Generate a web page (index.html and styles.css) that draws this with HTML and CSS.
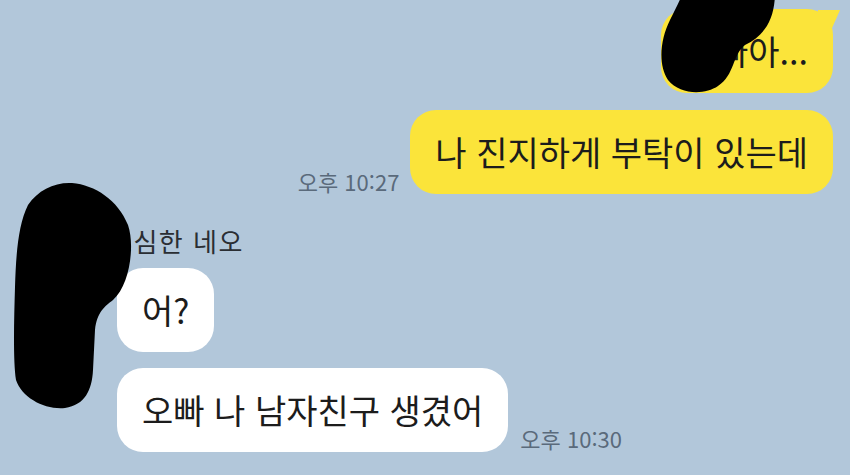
FILE: index.html
```html
<!DOCTYPE html>
<html lang="ko">
<head>
<meta charset="utf-8">
<link rel="stylesheet" href="styles.css">
</head>
<body>
<div class="chat">
  <div class="row mine">
    <div class="bubble yellow tail">오빠아...</div>
  </div>
  <div class="row mine second">
    <span class="time">오후 10:27</span>
    <div class="bubble yellow">나 진지하게 부탁이 있는데</div>
  </div>
  <div class="others">
    <div class="name">소심한 네오</div>
    <div class="row">
      <div class="bubble white">어?</div>
    </div>
    <div class="row gap">
      <div class="bubble white">오빠 나 남자친구 생겼어</div>
      <span class="time time-left">오후 10:30</span>
    </div>
  </div>
</div>
<svg class="scribble" width="850" height="475" viewBox="0 0 850 475">
  <path d="M682,-5 L775,-5 C774,20 765,35 745,45 C732,55 735,75 718,86 C705,95 680,95 668,80 C658,65 660,40 670,20 C675,10 679,2 682,-5 Z" fill="#000"/>
  <path d="M72,183 C95,185 118,200 128,225 C135,245 130,285 113,300 C105,306 97,312 95,330 L93,370 C92,390 85,405 65,408 C45,410 22,398 16,380 C13,360 14,320 15,287 C16,255 18,225 28,205 C38,190 55,182 72,183 Z" fill="#000"/>
</svg>
</body>
</html>
```
FILE: styles.css
```css
html, body {
  margin: 0;
  width: 850px;
  height: 475px;
  overflow: hidden;
  background: #b2c7da;
}
body {
  position: relative;
  font-family: "Noto Sans CJK KR", "Noto Sans", sans-serif;
  color: #1c1c1c;
}
.chat {
  display: flex;
  flex-direction: column;
  padding: 9px 17px 0 0;
}
.row {
  display: flex;
  align-items: flex-end;
}
.mine {
  justify-content: flex-end;
}
.second {
  margin-top: 17px;
}
.bubble {
  position: relative;
  font-size: 34px;
  line-height: 44px;
  padding: 20px 25px;
  border-radius: 26px;
  white-space: nowrap;
}
.yellow {
  background: #fbe43a;
}
.white {
  background: #ffffff;
}
.tail::after {
  content: "";
  position: absolute;
  top: 1px;
  right: -7px;
  width: 22px;
  height: 20px;
  background: #fbe43a;
  clip-path: polygon(0 0, 100% 0, 60% 100%, 0 100%);
}
.time {
  font-size: 22px;
  line-height: 26px;
  color: #5a6a7b;
  margin-right: 11px;
}
.time-left {
  margin-right: 0;
  margin-left: 12px;
  padding-bottom: 1px;
}
.others {
  display: flex;
  flex-direction: column;
  align-items: flex-start;
  margin-left: 117px;
  margin-top: 30px;
}
.name {
  font-size: 26px;
  line-height: 34px;
  letter-spacing: 1.5px;
  color: #2a2e33;
  margin-left: -9px;
  margin-bottom: 10px;
}
.gap {
  margin-top: 16px;
}
.scribble {
  position: absolute;
  top: 0;
  left: 0;
  pointer-events: none;
}
```
